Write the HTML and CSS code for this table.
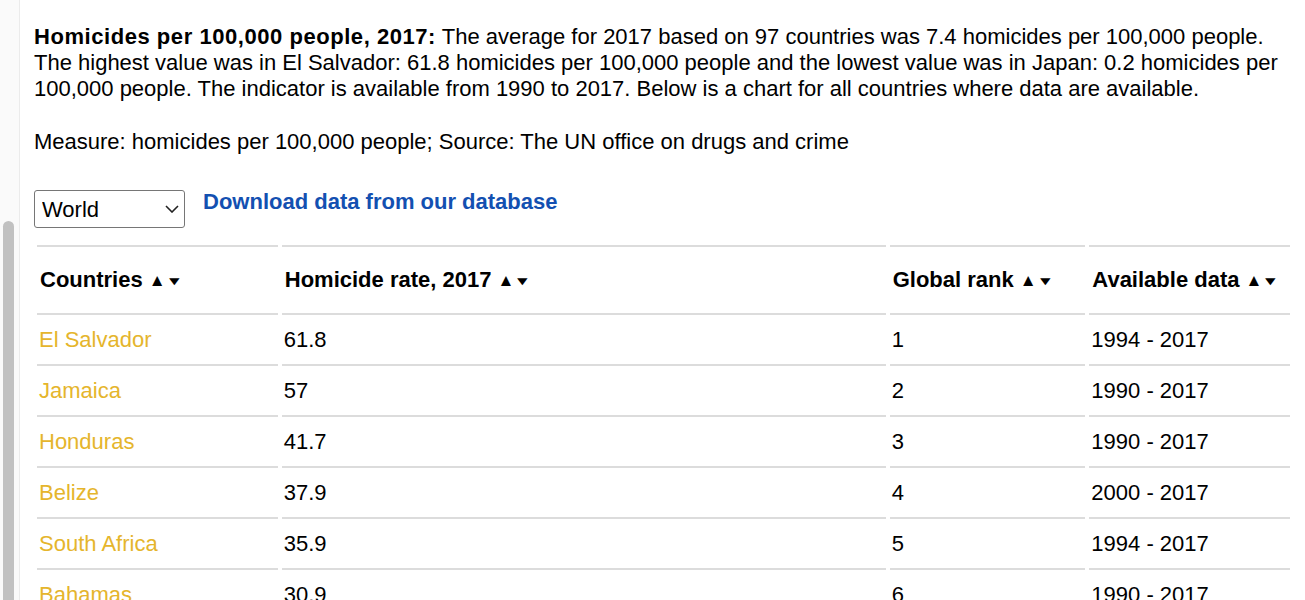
FILE: index.html
```html
<!DOCTYPE html>
<html lang="en">
<head>
<meta charset="utf-8">
<title>Homicides per 100,000 people, 2017</title>
<link rel="stylesheet" href="styles.css">
</head>
<body>
<div class="page">
  <div class="rail"><div class="thumb"></div></div>
  <main class="content">
    <p class="intro"><b class="lead">Homicides per 100,000 people, 2017:</b> The average for 2017 based on 97 countries was 7.4 homicides per 100,000 people. The highest value was in El Salvador: 61.8 homicides per 100,000 people and the lowest value was in Japan: 0.2 homicides per 100,000 people. The indicator is available from 1990 to 2017. Below is a chart for all countries where data are available.</p>
    <p class="measure">Measure: homicides per 100,000 people; Source: The UN office on drugs and crime</p>
    <div class="controls">
      <div class="select-wrap">
        <select class="region">
          <option>World</option>
        </select>
        <svg class="chev" width="14" height="8" viewBox="0 0 14 8"><path d="M1 1 L7 7 L13 1" fill="none" stroke="#222" stroke-width="1.6"/></svg>
      </div>
      <a class="dl" href="#">Download data from our database</a>
    </div>
    <table class="data">
      <thead>
        <tr>
          <th class="c1">Countries <span class="sort">▲<span class="dn">▼</span></span></th>
          <th class="c2">Homicide rate, 2017 <span class="sort">▲<span class="dn">▼</span></span></th>
          <th class="c3">Global rank <span class="sort">▲<span class="dn">▼</span></span></th>
          <th class="c4">Available data <span class="sort">▲<span class="dn">▼</span></span></th>
        </tr>
      </thead>
      <tbody>
        <tr><td class="country">El Salvador</td><td>61.8</td><td>1</td><td>1994 - 2017</td></tr>
        <tr><td class="country">Jamaica</td><td>57</td><td>2</td><td>1990 - 2017</td></tr>
        <tr><td class="country">Honduras</td><td>41.7</td><td>3</td><td>1990 - 2017</td></tr>
        <tr><td class="country">Belize</td><td>37.9</td><td>4</td><td>2000 - 2017</td></tr>
        <tr><td class="country">South Africa</td><td>35.9</td><td>5</td><td>1994 - 2017</td></tr>
        <tr><td class="country">Bahamas</td><td>30.9</td><td>6</td><td>1990 - 2017</td></tr>
        <tr><td class="country">Venezuela</td><td>26.8</td><td>7</td><td>1990 - 2017</td></tr>
      </tbody>
    </table>
  </main>
</div>
</body>
</html>
```
FILE: styles.css
```css
html, body {
  margin: 0;
  padding: 0;
  background: #fff;
  height: 600px;
  overflow: hidden;
}
body {
  font-family: "Liberation Sans", Arial, sans-serif;
  font-size: 22px;
  color: #000;
}
.page {
  display: flex;
  align-items: stretch;
  min-height: 600px;
}
.rail {
  width: 19px;
  flex: 0 0 19px;
  background: #fafafa;
  border-right: 1px solid #ebebeb;
  padding-top: 221px;
  box-sizing: content-box;
}
.thumb {
  width: 11px;
  height: 400px;
  margin-left: 3px;
  background: #c1c1c1;
  border-radius: 6px;
}
.content {
  flex: 1;
  padding: 24px 13px 0 14px;
}
.intro {
  margin: 0;
  line-height: 26px;
}
.lead {
  letter-spacing: 0.55px;
}
.measure {
  margin: 27px 0 0;
  line-height: 26px;
}
.controls {
  display: flex;
  align-items: flex-start;
  gap: 18px;
  margin-top: 35px;
}
.select-wrap {
  position: relative;
  width: 151px;
  height: 38px;
}
.region {
  appearance: none;
  -webkit-appearance: none;
  width: 151px;
  height: 38px;
  box-sizing: border-box;
  border: 1px solid #767676;
  border-radius: 3px;
  background: #fff;
  font-family: "Liberation Sans", Arial, sans-serif;
  font-size: 22px;
  color: #000;
  padding: 0 0 0 7px;
  margin: 0;
}
.chev {
  position: absolute;
  left: 131px;
  top: 15px;
  pointer-events: none;
}
.dl {
  color: #1350b1;
  font-weight: bold;
  text-decoration: none;
  line-height: 24px;
}
.data {
  border-collapse: separate;
  border-spacing: 4px 0;
  margin: 17px 0 0 -1px;
  table-layout: fixed;
  width: 1261px;
}
.data th, .data td {
  border-top: 2px solid #dcdcdc;
  text-align: left;
  line-height: 23px;
  height: 23px;
  padding: 13px 2px;
  white-space: nowrap;
}
.data th {
  font-weight: bold;
  padding: 21px 2px 22px 3px;
}
.c1 { width: 235px; }
.c2 { width: 597px; }
.c3 { width: 190px; }
.c4 { width: 195px; }
.sort {
  font-size: 17px;
  line-height: 0;
  vertical-align: 1px;
}
.dn {
  display: inline-block;
  transform: scale(1.05, 0.7);
  line-height: 0;
}
.country {
  color: #e5b52c;
}
```
